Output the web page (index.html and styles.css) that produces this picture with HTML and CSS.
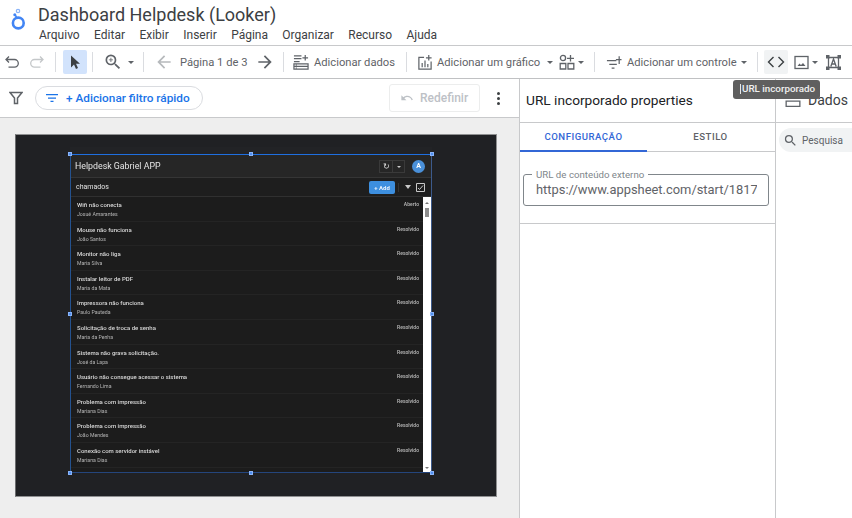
FILE: index.html
```html
<!DOCTYPE html>
<html lang="pt-BR">
<head>
    <meta charset="UTF-8">
    <meta name="viewport" content="width=device-width, initial-scale=1.0">
    <title>Dashboard Helpdesk (Looker)</title>
    <link rel="stylesheet" href="styles.css">
</head>
<body>
    <header class="topbar">
        <svg class="logo" width="20" height="30" viewBox="0 0 20 30">
            <circle cx="9.300" cy="22" r="5.400" fill="none" stroke="#4285f4" stroke-width="2.600"/>
            <circle cx="9" cy="10" r="1.700" fill="none" stroke="#8ab4f8" stroke-width="1.200"/>
            <circle cx="5.800" cy="13.800" r="1.500" fill="#4285f4"/>
            <path d="M6.500 14.500l1.500 2.500" stroke="#4285f4" stroke-width="1.500"/>
        </svg>
        <div class="doc">
            <h1>Dashboard Helpdesk (Looker)</h1>
            <nav class="menu">
                <span>Arquivo</span><span>Editar</span><span>Exibir</span><span>Inserir</span><span>Página</span><span>Organizar</span><span>Recurso</span><span>Ajuda</span>
            </nav>
        </div>
    </header>

    <div class="toolbar">
        <svg class="line-ico undo" viewBox="0 0 16 16"><path d="M5 2.500L2 5.500l3 3M2 5.500h8.500a3.800 3.800 0 0 1 0 7.600H4.500"/></svg>
        <svg class="line-ico redo" viewBox="0 0 16 16"><path d="M11 2.500l3 3-3 3M14 5.500H5.500a3.800 3.800 0 0 0 0 7.600h6"/></svg>
        <i class="sep sep-a"></i>
        <span class="tool-btn active"><svg width="14" height="16" viewBox="0 0 14 16"><path d="M3 1.500v12l3-3 2 4.500 2-1-2-4.200h4z" fill="#3c4043"/></svg></span>
        <i class="sep sep-b"></i>
        <svg class="ico zoom" viewBox="0 0 24 24"><path d="M15.500 14h-.79l-.28-.27A6.470 6.470 0 0 0 16 9.500 6.500 6.500 0 1 0 9.500 16c1.610 0 3.090-.59 4.230-1.570l.27.28v.79l5 4.990L20.490 19l-4.990-5zm-6 0C7.010 14 5 11.990 5 9.500S7.010 5 9.500 5 14 7.010 14 9.500 11.990 14 9.500 14z"/><path d="M12 10h-2v2H9v-2H7V9h2V7h1v2h2v1z"/></svg>
        <i class="caret caret-zoom"></i>
        <i class="sep sep-c"></i>
        <svg class="ico arrow prev" viewBox="0 0 24 24"><path d="M20 11H7.830l5.590-5.590L12 4l-8 8 8 8 1.410-1.410L7.830 13H20v-2z"/></svg>
        <span class="pages">Página 1 de 3</span>
        <svg class="ico arrow next" viewBox="0 0 24 24"><path d="M12 4l-1.410 1.410L16.170 11H4v2h12.170l-5.580 5.590L12 20l8-8z"/></svg>
        <i class="sep sep-d"></i>
        <svg class="line-ico big add-data" viewBox="0 0 17 17"><path d="M1 2h8M1 5h8M1 8h6M13 1v6M10 4h6M1 10.500h15v5.500H1zM1 13.200h15M3 11.900h.8M3 14.700h.8"/></svg>
        <span class="label l-data">Adicionar dados</span>
        <i class="sep sep-e"></i>
        <svg class="line-ico big add-chart" viewBox="0 0 16 17"><path d="M7 3.500H1.500v12.500h13V8M12 1v6M9 4h6M5 14V9.500M8 14V7M11 14v-3.500"/></svg>
        <span class="label l-chart">Adicionar um gráfico</span>
        <i class="caret caret-chart"></i>
        <svg class="line-ico big shapes" viewBox="0 0 16 16"><circle cx="4" cy="4" r="2.600"/><path d="M11.500 1v6.500M8 4.300h7M1.200 9.500h5.600v5.500H1.200zM9 9.500h5.800v5.500H9z"/></svg>
        <i class="caret caret-shapes"></i>
        <i class="sep sep-f"></i>
        <svg class="line-ico big add-control" viewBox="0 0 17 16"><path d="M1 6.500h10M3.500 10.500h8M6 14.500h3M14 2v8M10.500 5.500h6"/></svg>
        <span class="label l-control">Adicionar um controle</span>
        <i class="caret caret-control"></i>
        <i class="sep sep-g"></i>
        <span class="tool-btn hover"><svg width="18" height="12" viewBox="0 0 18 12"><path d="M6.500 1L1.500 6l5 5M11.500 1l5 5-5 5" fill="none" stroke="#3c4043" stroke-width="1.400"/></svg></span>
        <svg class="line-ico big image" viewBox="0 0 15 15"><rect x="1" y="1.500" width="13" height="12"/><path class="solid" d="M3.500 11l2-2.500 1.500 1.500 2-2 2.500 3z"/></svg>
        <i class="caret caret-image"></i>
        <svg class="line-ico big textbox" viewBox="0 0 15 15"><path d="M2.500 2.500h10v10h-10zM4.800 11.500L7.500 4l2.700 7.500M5.700 9h3.600"/><path class="solid" d="M0 0h3.500v3.500H0zM11.500 0H15v3.500h-3.500zM0 11.500h3.500V15H0zM11.500 11.500H15V15h-3.500z"/></svg>
    </div>

    <main class="workspace">
        <section class="editor">
            <div class="filterbar">
                <svg class="funnel" width="14" height="14" viewBox="0 0 14 14"><path d="M1 1.500h12L8.500 7v5.500h-3V7z" fill="none" stroke="#5f6368" stroke-width="1.500"/></svg>
                <button class="chip">
                    <svg width="12" height="10" viewBox="0 0 12 10"><path d="M0 1h12v1.300H0zM2 4.400h8v1.300H2zM4.500 7.800h3v1.300h-3z" fill="#1a73e8"/></svg>
                    + Adicionar filtro rápido
                </button>
                <button class="reset">
                    <svg width="14" height="9" viewBox="0 0 24 16"><path d="M12.500 3c-2.650 0-5.050 1-6.900 2.600L2 2v9h9L7.380 7.380C8.770 6.220 10.540 5.500 12.500 5.500c3.540 0 6.550 2.310 7.600 5.500l2.370-.78C21.080 6.030 17.150 3 12.500 3z" fill="#bdc1c6"/></svg>
                    Redefinir
                </button>
                <span class="dots"><i></i><i></i><i></i></span>
            </div>
            <div class="canvas">
                <div class="report-page">
                    <div class="embed">
                        <div class="app-head">
                            <span class="app-title">Helpdesk Gabriel APP</span>
                            <span class="sync"><b>&#8635;</b><b class="sync-caret"></b></span>
                            <span class="avatar">A</span>
                        </div>
                        <div class="app-view">
                            <span class="view-name">chamados</span>
                            <span class="add-btn">+ Add</span>
                            <i class="view-sep"></i>
                            <i class="view-filter"></i>
                            <svg class="view-check" width="9" height="9" viewBox="0 0 9 9"><path d="M.5.5h8v8h-8zM2 5l1.500 1.500L7 2.500" fill="none" stroke="#c8c8c8"/></svg>
                        </div>
                        <div class="app-body">
                            <ul class="rows">
                                <li><div><strong>Wifi não conecta</strong><small>Josué Amarantes</small></div><em>Aberto</em></li>
                                <li><div><strong>Mouse não funciona</strong><small>João Santos</small></div><em>Resolvido</em></li>
                                <li><div><strong>Monitor não liga</strong><small>Maria Silva</small></div><em>Resolvido</em></li>
                                <li><div><strong>Instalar leitor de PDF</strong><small>Maria da Mata</small></div><em>Resolvido</em></li>
                                <li><div><strong>Impressora não funciona</strong><small>Paulo Pauteda</small></div><em>Resolvido</em></li>
                                <li><div><strong>Solicitação de troca de senha</strong><small>Maria da Penha</small></div><em>Resolvido</em></li>
                                <li><div><strong>Sistema não grava solicitação.</strong><small>José da Lapa</small></div><em>Resolvido</em></li>
                                <li><div><strong>Usuário não consegue acessar o sistema</strong><small>Fernando Lima</small></div><em>Resolvido</em></li>
                                <li><div><strong>Problema com impressão</strong><small>Mariana Dias</small></div><em>Resolvido</em></li>
                                <li><div><strong>Problema com impressão</strong><small>João Mendes</small></div><em>Resolvido</em></li>
                                <li><div><strong>Conexão com servidor instável</strong><small>Mariana Dias</small></div><em>Resolvido</em></li>
                            </ul>
                            <div class="scrollbar"><i class="up"></i><i class="thumb"></i><i class="down"></i></div>
                        </div>
                        <i class="handle h-tl"></i><i class="handle h-tc"></i><i class="handle h-tr"></i>
                        <i class="handle h-ml"></i><i class="handle h-mr"></i>
                        <i class="handle h-bl"></i><i class="handle h-bc"></i><i class="handle h-br"></i>
                    </div>
                </div>
            </div>
        </section>

        <aside class="props">
            <h2>URL incorporado properties</h2>
            <div class="tabs">
                <span class="tab current">Configuração</span>
                <span class="tab">Estilo</span>
            </div>
            <div class="field-wrap">
                <fieldset class="field">
                    <legend>URL de conteúdo externo</legend>
                    <div class="field-value">https://www.appsheet.com/start/1817</div>
                </fieldset>
            </div>
        </aside>

        <aside class="data">
            <div class="data-head">
                <svg width="16" height="14" viewBox="0 0 16 14"><path d="M.5 0h15v5.500H.5zM1.800 1.300v2.900h12.400V1.300zM.5 7.500h15V14H.5zm1.300 1.300V12.700h12.400V8.800z" fill="#5f6368"/></svg>
                <span>Dados</span>
            </div>
            <div class="search">
                <svg width="15" height="15" viewBox="0 0 24 24"><path d="M15.500 14h-.79l-.28-.27A6.470 6.470 0 0 0 16 9.500 6.500 6.500 0 1 0 9.500 16c1.610 0 3.090-.59 4.230-1.570l.27.28v.79l5 4.990L20.490 19l-4.990-5zm-6 0C7.010 14 5 11.990 5 9.500S7.010 5 9.500 5 14 7.010 14 9.500 11.990 14 9.500 14z" fill="#5f6368"/></svg>
                <span>Pesquisa</span>
            </div>
        </aside>
    </main>

    <div class="tooltip">URL incorporado</div>
</body>
</html>
```

FILE: styles.css
```css
* {
    box-sizing: border-box;
}
html, body {
    height: 100%;
}
body {
    font-family: Roboto, Arial, sans-serif;
    margin: 0;
    padding: 0;
    background-color: #fff;
    color: #3c4043;
    overflow: hidden;
    position: relative;
}

/* cabecalho */
.topbar {
    height: 46px;
    display: flex;
    border-bottom: 1px solid #c8c9cb;
}
.logo {
    margin: 1px 0 0 9px;
    flex: none;
}
.doc {
    margin-left: 9px;
}
h1 {
    font-size: 18px;
    font-weight: 400;
    line-height: 22px;
    margin: 4px 0 0;
    color: #3c4043;
}
.menu {
    display: flex;
    gap: 14.400px;
    font-size: 12px;
    line-height: 16px;
    margin: 1px 0 0 1px;
}

/* barra de ferramentas */
.toolbar {
    height: 33px;
    display: flex;
    align-items: center;
    border-bottom: 1px solid #c0c1c3;
}
.ico {
    width: 20px;
    height: 20px;
    fill: #5f6368;
    flex: none;
}
.line-ico {
    width: 16px;
    height: 16px;
    fill: none;
    stroke: #5f6368;
    stroke-width: 1.300;
    flex: none;
}
.line-ico .solid {
    fill: #5f6368;
    stroke: none;
}
.sep {
    width: 1px;
    height: 20px;
    background: #dadce0;
    flex: none;
}
.caret {
    width: 0;
    height: 0;
    border-left: 3.500px solid transparent;
    border-right: 3.500px solid transparent;
    border-top: 3.500px solid #5f6368;
    flex: none;
}
.tool-btn {
    width: 24px;
    height: 24px;
    border-radius: 2px;
    display: flex;
    align-items: center;
    justify-content: center;
    flex: none;
}
.tool-btn.active {
    background: #d2e3fc;
    margin-left: 7px;
}
.tool-btn.hover {
    background: #f1f3f4;
    margin-left: 6px;
}
.undo {
    margin-left: 4px;
}
.redo {
    margin-left: 9px;
    stroke: #c4c7c9;
}
.sep-a {
    margin-left: 10px;
}
.sep-b {
    margin-left: 5px;
}
.zoom {
    margin-left: 10px;
}
.caret-zoom {
    margin-left: 5px;
}
.sep-c {
    margin-left: 9px;
}
.prev {
    margin-left: 10px;
    fill: #b6b9bc;
}
.pages, .label {
    font-size: 11.200px;
    color: #5f6368;
    white-space: nowrap;
    flex: none;
}
.pages {
    margin-left: 6px;
    width: 68px;
}
.next {
    margin-left: 7px;
}
.sep-d {
    margin-left: 8px;
}
.add-data {
    margin-left: 9px;
}
.label {
    margin-left: 5px;
}
.l-data {
    width: 82px;
}
.sep-e {
    margin-left: 10px;
}
.add-chart {
    margin-left: 10px;
}
.l-chart {
    margin-left: 4px;
    width: 105px;
}
.caret-chart {
    margin-left: 5px;
}
.shapes {
    margin-left: 6px;
}
.caret-shapes {
    margin-left: 3px;
}
.sep-f {
    margin-left: 10px;
}
.add-control {
    margin-left: 11px;
}
.l-control {
    width: 110px;
}
.caret-control {
    margin-left: 4px;
}
.sep-g {
    margin-left: 10px;
}
.image {
    margin-left: 6px;
    width: 15px;
    height: 15px;
}
.caret-image {
    margin-left: 3px;
}
.textbox {
    margin-left: 8px;
    width: 15px;
    height: 15px;
}

/* area principal */
.workspace {
    display: flex;
    height: 439px;
}
.editor {
    width: 519px;
    flex: none;
    display: flex;
    flex-direction: column;
}
.filterbar {
    height: 39px;
    display: flex;
    align-items: center;
    border-bottom: 1px solid #c8c9cb;
    flex: none;
}
.funnel {
    margin-left: 9px;
    flex: none;
}
.chip {
    margin-left: 12px;
    width: 168px;
    height: 24px;
    border: 1px solid #dadce0;
    border-radius: 12px;
    background: #fff;
    color: #1a73e8;
    font: 500 11.800px Roboto, Arial, sans-serif;
    display: flex;
    align-items: center;
    gap: 8px;
    padding: 0 0 0 10px;
    white-space: nowrap;
}
.reset {
    margin-left: 186px;
    width: 91px;
    height: 28px;
    border: 1px solid #eceded;
    border-radius: 3px;
    background: #fff;
    color: #bdc1c6;
    font: 500 12px Roboto, Arial, sans-serif;
    display: flex;
    align-items: center;
    gap: 6px;
    padding: 0 0 0 10px;
}
.dots {
    margin-left: 17px;
    display: flex;
    flex-direction: column;
    gap: 2px;
}
.dots i {
    width: 3px;
    height: 3px;
    border-radius: 50%;
    background: #3c4043;
}
.canvas {
    flex: 1;
    background: #eeeeee;
    padding: 16px 0 0 15px;
    overflow: hidden;
}
.report-page {
    width: 482px;
    height: 363px;
    background: #202124;
    border-top: 1px solid #8f9091;
    border-left: 1px solid #6b6c6e;
    border-right: 1px solid #8f9091;
    border-bottom: 1px solid #8f9091;
    padding: 19px 0 0 54px;
}

/* app incorporado */
.embed {
    width: 362px;
    height: 319px;
    position: relative;
    display: flex;
    flex-direction: column;
    border: 1px solid #1967d2;
    border-color: #1f6fe0 #3c5a8c #24457c #24528f;
    background: #1c1c1c;
    box-shadow: 0 -7px 0 #222326;
}
.app-head, .app-view, .rows {
    filter: blur(.25px);
}
.app-head {
    height: 23px;
    background: #262626;
    display: flex;
    align-items: center;
    flex: none;
    border-bottom: 1px solid #353535;
    padding-left: 4px;
}
.app-title {
    font-size: 8.800px;
    color: #e4e4e4;
}
.sync {
    margin-left: auto;
    display: flex;
    height: 13px;
    border: 1px solid #3a3a3a;
    color: #ddd;
    font-size: 8px;
    line-height: 11px;
}
.sync b {
    width: 12px;
    text-align: center;
    font-weight: 400;
    position: relative;
}
.sync-caret {
    border-left: 1px solid #3a3a3a;
}
.sync-caret::after {
    content: "";
    position: absolute;
    left: 4px;
    top: 5px;
    border-left: 2px solid transparent;
    border-right: 2px solid transparent;
    border-top: 2px solid #ccc;
}
.avatar {
    width: 13px;
    height: 13px;
    border-radius: 50%;
    background: #4a90d9;
    color: #fff;
    font-size: 7px;
    font-weight: 700;
    line-height: 13px;
    text-align: center;
    margin: 0 6px 0 7px;
}
.app-view {
    height: 19px;
    display: flex;
    align-items: center;
    flex: none;
    background: #1e1e1e;
    border-bottom: 1px solid #303030;
    padding: 0 6px 0 5px;
}
.view-name {
    font-size: 7px;
    color: #e2e2e2;
}
.add-btn {
    margin-left: auto;
    width: 26px;
    height: 13px;
    border-radius: 2px;
    background: #3d8fdf;
    color: #e8f1fb;
    font-size: 6px;
    font-weight: 700;
    line-height: 13px;
    text-align: center;
}
.view-sep {
    width: 1px;
    height: 9px;
    background: #333;
    margin-left: 3px;
}
.view-filter {
    margin-left: 6px;
    border-left: 3px solid transparent;
    border-right: 3px solid transparent;
    border-top: 4px solid #c8c8c8;
}
.view-check {
    margin-left: 5px;
    flex: none;
}
.app-body {
    flex: 1;
    display: flex;
    min-height: 0;
}
.rows {
    flex: 1;
    list-style: none;
    margin: 0;
    padding: 0;
    overflow: hidden;
}
.rows li {
    height: 24.600px;
    display: flex;
    justify-content: space-between;
    padding: 3px 4px 0 6px;
    border-bottom: 1px solid #242424;
}
.rows strong {
    display: block;
    font-size: 6px;
    line-height: 9px;
    font-weight: 500;
    color: #d8d8d8;
}
.rows small {
    display: block;
    font-size: 5.200px;
    line-height: 9px;
    margin-top: 1px;
    color: #b4b4b4;
}
.rows em {
    font-size: 5px;
    line-height: 9px;
    font-style: normal;
    font-weight: 500;
    color: #bdbdbd;
}
.scrollbar {
    width: 8px;
    flex: none;
    background: #fff;
    display: flex;
    flex-direction: column;
    align-items: center;
    padding: 5px 0 3px;
}
.scrollbar .up {
    border-left: 2px solid transparent;
    border-right: 2px solid transparent;
    border-bottom: 2px solid #777;
}
.scrollbar .thumb {
    width: 4px;
    height: 9px;
    background: #8d8d8d;
    margin-top: 4px;
}
.scrollbar .down {
    margin-top: auto;
    border-left: 2px solid transparent;
    border-right: 2px solid transparent;
    border-top: 2px solid #777;
}
.handle {
    position: absolute;
    width: 4px;
    height: 4px;
    background: #4f8ff0;
    border: 1px solid #8ab4f8;
}
.h-tl { left: -3px; top: -3px; }
.h-tc { left: 178px; top: -3px; }
.h-tr { right: -3px; top: -3px; }
.h-ml { left: -3px; top: 157px; }
.h-mr { right: -3px; top: 157px; }
.h-bl { left: -3px; bottom: -3px; }
.h-bc { left: 178px; bottom: -3px; }
.h-br { right: -3px; bottom: -3px; }

/* painel de propriedades */
.props {
    width: 257px;
    flex: none;
    border-left: 1px solid #c8c9cb;
    border-right: 1px solid #c8c9cb;
}
.props h2 {
    font-size: 13.700px;
    font-weight: 400;
    line-height: 20px;
    margin: 0;
    padding: 11px 0 0 6px;
    height: 44px;
    color: #202124;
    border-bottom: 1px solid #c8c9cb;
}
.tabs {
    display: flex;
    height: 29px;
    border-bottom: 1px solid #c8c9cb;
}
.tab {
    width: 127px;
    text-align: center;
    font-size: 9.600px;
    font-weight: 500;
    letter-spacing: .5px;
    line-height: 27px;
    text-transform: uppercase;
    color: #5f6368;
}
.tab.current {
    color: #3367d6;
    border-bottom: 2px solid #3367d6;
    height: 29px;
}
.field-wrap {
    height: 72px;
    padding: 17px 0 0 3px;
    border-bottom: 1px solid #c8c9cb;
}
.field {
    width: 246px;
    min-width: 0;
    height: 37px;
    margin: 0;
    padding: 0 11px 0 12px;
    border: 1px solid #80868b;
    border-radius: 3px;
}
.field legend {
    font-size: 9.700px;
    line-height: 11px;
    padding: 0 4px;
    margin-left: -4px;
    color: #80868b;
}
.field-value {
    font-size: 12.900px;
    line-height: 20px;
    color: #5f6368;
    overflow: hidden;
    white-space: nowrap;
}

/* painel de dados */
.data {
    flex: 1;
    min-width: 0;
    overflow: hidden;
}
.data-head {
    height: 44px;
    display: flex;
    align-items: center;
    padding: 0 0 2px 9px;
    border-bottom: 1px solid #c8c9cb;
    font-size: 14px;
    color: #3c4043;
    gap: 7px;
    white-space: nowrap;
}
.search {
    margin: 5px 0 0 3px;
    width: 90px;
    height: 24px;
    background: #f1f3f4;
    border-radius: 12px 0 0 12px;
    display: flex;
    align-items: center;
    gap: 4px;
    padding-left: 4px;
    font-size: 10px;
    color: #5f6368;
}
.tooltip {
    position: absolute;
    left: 733px;
    top: 80px;
    width: 87px;
    height: 19px;
    border-radius: 3px;
    background: #5f5f5f;
    color: #f1f1f1;
    font-size: 9.800px;
    font-weight: 500;
    line-height: 18px;
    padding-left: 9px;
    white-space: nowrap;
}
.tooltip::before {
    content: "";
    position: absolute;
    left: 7px;
    top: 4px;
    width: 1px;
    height: 10px;
    background: #e8e8e8;
}
```
